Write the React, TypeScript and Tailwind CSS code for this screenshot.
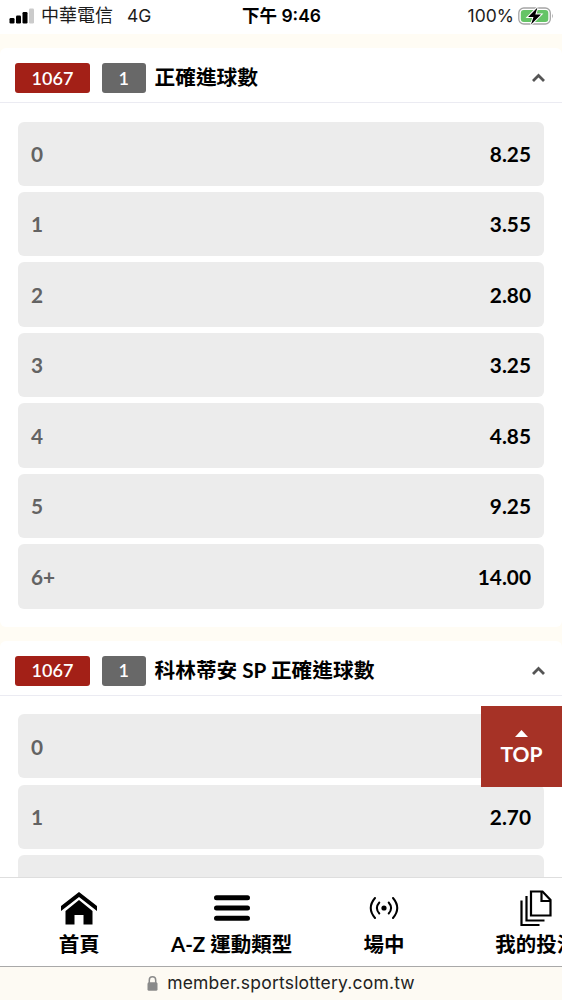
import type { ReactNode } from "react";

type Market = {
  code: string;
  legs: string;
  title: string;
  odds: { label: string; price: string }[];
};

const markets: Market[] = [
  {
    code: "1067",
    legs: "1",
    title: "正確進球數",
    odds: [
      { label: "0", price: "8.25" },
      { label: "1", price: "3.55" },
      { label: "2", price: "2.80" },
      { label: "3", price: "3.25" },
      { label: "4", price: "4.85" },
      { label: "5", price: "9.25" },
      { label: "6+", price: "14.00" },
    ],
  },
  {
    code: "1067",
    legs: "1",
    title: "科林蒂安 SP 正確進球數",
    odds: [
      { label: "0", price: "" },
      { label: "1", price: "2.70" },
      { label: "", price: "" },
    ],
  },
];

function StatusBar() {
  return (
    <header className="grid h-[34px] shrink-0 grid-cols-3 items-center bg-white pr-2 pl-[9px] font-['Inter','Noto_Sans_CJK_TC',sans-serif] text-[18px] leading-[30px] text-[#1c1c1c]">
      <div className="flex items-center pb-0.5 whitespace-nowrap">
        <svg width="26" height="16" viewBox="0 0 26 16" className="shrink-0">
          <rect x="0.5" y="10" width="5" height="5.5" rx="1.2" />
          <rect x="7" y="7.5" width="5" height="8" rx="1.2" />
          <rect x="13.5" y="4" width="5" height="11.5" rx="1.2" />
          <rect x="20" y="0.5" width="5" height="15" rx="1.2" fill="#cbcbcb" />
        </svg>
        <span className="ml-1.5">中華電信</span>
        <span className="ml-3.5 text-[17.5px]">4G</span>
      </div>
      <div className="pb-0.5 text-center text-[17.5px] font-semibold whitespace-nowrap text-black">下午 9:46</div>
      <div className="flex items-center justify-end gap-1 pb-0.5">
        <span className="text-[17.5px]">100%</span>
        <svg width="36" height="20" viewBox="0 0 36 20" className="shrink-0">
          <rect x="0.8" y="2" width="31.5" height="16" rx="5" fill="none" stroke="#a5a5a5" strokeWidth="1.3" />
          <rect x="2.8" y="4" width="27.5" height="12" rx="3" fill="#65c466" />
          <path d="M34 7.5q1.8 2.5 0 5z" fill="#a5a5a5" />
          <path d="M19.5 1.5 10 11h5.5L13 18.5l10-10h-5.7z" stroke="#fff" strokeWidth="2" paintOrder="stroke" />
        </svg>
      </div>
    </header>
  );
}

function MarketCard({ market }: { market: Market }) {
  return (
    <section className="shrink-0 rounded-md bg-white">
      <div className="flex h-[55px] items-center border-b border-[#ebebf2] pt-1.5 pr-4 pl-[15px]">
        <span className="mr-3 flex h-[30px] w-[75px] items-center justify-center rounded-[3px] bg-[#a32017] text-[18px] font-semibold text-white">
          {market.code}
        </span>
        <span className="mr-[9px] flex h-[30px] w-[43.5px] items-center justify-center rounded-[3px] bg-[#686868] text-[18px] font-semibold text-white">
          {market.legs}
        </span>
        <h2 className="grow text-[20.7px] font-bold whitespace-nowrap text-black">{market.title}</h2>
        <svg width="15" height="10" viewBox="0 0 15 10" className="shrink-0">
          <path d="M2 8 7.5 2.5 13 8" fill="none" stroke="#555" strokeWidth="2.8" />
        </svg>
      </div>
      <div className="flex flex-col gap-[6.3px] px-[18px] pt-[18.5px] pb-[18px]">
        {market.odds.map((o, i) => (
          <div
            key={i}
            className="flex h-[64.2px] items-center justify-between rounded-md bg-[#ececec] px-[13px] text-[20.8px]"
          >
            <span className="font-bold text-[#636363]">{o.label}</span>
            <span className="font-bold text-black">{o.price}</span>
          </div>
        ))}
      </div>
    </section>
  );
}

function NavItem({ label, children }: { label: string; children: ReactNode }) {
  return (
    <a className="flex w-[152.4px] shrink-0 flex-col items-center">
      <span className="flex h-[38px] items-center">{children}</span>
      <span className="text-[20.5px] leading-[34px] font-bold whitespace-nowrap text-black">{label}</span>
    </a>
  );
}

export default function App() {
  return (
    <div className="relative flex h-[1000px] w-[562px] flex-col overflow-hidden bg-[#fffcf4] font-['Lato','Noto_Sans_CJK_TC',sans-serif]">
      <StatusBar />

      <main className="flex min-h-0 grow flex-col gap-3.5 overflow-hidden pt-3.5">
        {markets.map((m) => (
          <MarketCard key={m.title} market={m} />
        ))}
      </main>

      {/* Back to top */}
      <button className="absolute top-[705.5px] right-0 flex h-[81px] w-[81px] flex-col items-center bg-[#a63226] pt-6 text-white">
        <svg width="13" height="7" viewBox="0 0 13 7">
          <path d="M6.5 0 13 7H0z" fill="currentColor" />
        </svg>
        <span className="mt-1 text-[21px] leading-[26px] font-bold">TOP</span>
      </button>

      <nav className="flex h-[89px] shrink-0 overflow-hidden border-t border-[#dedede] bg-white pt-[11px] pl-[3px]">
        <NavItem label="首頁">
          <svg width="38" height="34" viewBox="0 0 38 34">
            <path d="M1 15 19 1l18 14v5L19 6 1 20z" />
            <path d="M5.5 20 19 9l13.5 11v13.5h-9V24h-9v9.5h-9z" />
          </svg>
        </NavItem>
        <NavItem label="A-Z 運動類型">
          <svg width="38" height="28" viewBox="0 0 38 28" stroke="#000" strokeWidth="5" strokeLinecap="round">
            <path d="M3.5 3.700h31M3.500 14h31M3.500 24.300h31" />
          </svg>
        </NavItem>
        <NavItem label="場中">
          <svg width="30" height="24" viewBox="0 0 30 24" fill="none" stroke="#000" strokeWidth="2" strokeLinecap="round">
            <path d="M6 2Q-2.500 12 6 22M24 2q8.500 10 0 20" />
            <path d="M10.300 6.500Q5.500 12 10.300 17.500M19.700 6.500q4.800 5.500 0 11" />
            <circle cx="15" cy="12" r="2.600" fill="#000" stroke="none" />
          </svg>
        </NavItem>
        <NavItem label="我的投注">
          <svg width="32" height="36" viewBox="0 0 32 36" fill="none" stroke="#000" strokeWidth="2.200">
            <path d="M11 1.500h11.500L30.500 10v15.500H11z" />
            <path d="M21.500 1.500V11h9" />
            <path d="M6.500 6v24.500h18M1.500 10.500V35h18" />
          </svg>
        </NavItem>
      </nav>

      {/* Collapsed address bar */}
      <footer className="flex h-[34px] shrink-0 items-center justify-center gap-[9px] border-t border-[#a9a9a9] bg-[#fdfaf3] font-['Inter',sans-serif] text-[17.500px] tracking-[0.200px] text-[#222]">
        <svg width="11" height="15" viewBox="0 0 11 15" className="shrink-0">
          <path d="M2.300 7V4a3.200 3.200 0 0 1 6.400 0v3" fill="none" stroke="#8a8a8a" strokeWidth="1.500" />
          <rect x="0.500" y="6.200" width="10" height="8.500" rx="1.500" fill="#8a8a8a" />
        </svg>
        <span>member.sportslottery.com.tw</span>
      </footer>
    </div>
  );
}
